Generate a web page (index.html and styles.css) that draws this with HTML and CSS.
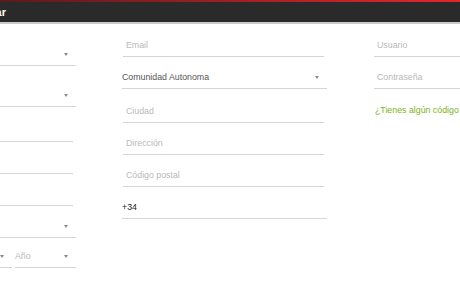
FILE: index.html
```html
<!DOCTYPE html>
<html lang="es">

<head>
    <meta charset="UTF-8">
    <meta name="viewport" content="width=device-width, initial-scale=1.0">
    <title>Registrar</title>
    <link rel="stylesheet" href="styles.css">
</head>

<body>
    <header class="topbar">
        <div class="topbar-title">
            <h1>Registrar</h1>
        </div>
    </header>

    <form class="register" id="registerForm">
        <div class="column">
            <div class="select first"><span class="value"></span><span class="caret"></span></div>
            <div class="select"><span class="value"></span><span class="caret"></span></div>
            <div class="field loose"><span class="placeholder">Nombre</span></div>
            <div class="field"><span class="placeholder">Apellidos</span></div>
            <div class="field"><span class="placeholder">DNI</span></div>
            <div class="select"><span class="value"></span><span class="caret"></span></div>
            <div class="date-row">
                <div class="select"><span class="placeholder">Día</span><span class="caret"></span></div>
                <div class="select"><span class="placeholder">Mes</span><span class="caret"></span></div>
                <div class="select"><span class="placeholder">Año</span><span class="caret"></span></div>
            </div>
        </div>

        <div class="column">
            <div class="field"><span class="placeholder">Email</span></div>
            <div class="select wide"><span class="value">Comunidad Autonoma</span><span class="caret"></span></div>
            <div class="field"><span class="placeholder">Ciudad</span></div>
            <div class="field"><span class="placeholder">Dirección</span></div>
            <div class="field"><span class="placeholder">Código postal</span></div>
            <div class="field phone"><span class="value">+34</span></div>
        </div>

        <div class="column">
            <div class="field"><span class="placeholder">Usuario</span></div>
            <div class="field"><span class="placeholder">Contraseña</span></div>
            <a href="#" class="promo">¿Tienes algún código promocional?</a>
        </div>
    </form>
</body>

</html>
```

FILE: styles.css
```css
body {
    margin: 0;
    font-family: 'Liberation Sans', Arial, sans-serif;
    font-size: 8.8px;
    background-color: #fff;
    color: #333;
    overflow: hidden;
}

.topbar {
    height: 20px;
    padding-top: 2px;
    background: linear-gradient(to right, #5a1a1c, #e3262c) top / 100% 2px no-repeat, #2a2a2a;
    border-bottom: 2px solid #c9c9c9;
    display: flex;
    align-items: center;
}

.topbar-title {
    width: 6px;
    display: flex;
    justify-content: flex-end;
}

.topbar-title h1 {
    margin: 0;
    white-space: nowrap;
    font-size: 11px;
    font-weight: bold;
    color: #fff;
}

.register {
    display: grid;
    grid-template-columns: 205px 205px 205px;
    column-gap: 46px;
    margin-left: -129px;
    padding-top: 11px;
}

.column {
    display: flex;
    flex-direction: column;
    gap: 10px;
}

.field,
.select {
    height: 21px;
    line-height: 21px;
    border-bottom: 1px solid #d4d4d4;
    display: flex;
    align-items: center;
    justify-content: space-between;
}

.field {
    margin: 0 3px 0 1px;
    padding-left: 3px;
}

.select {
    padding-right: 8px;
}

.select.first {
    margin-top: 9px;
    margin-bottom: 9px;
}

.select.wide {
    margin-bottom: 2px;
}

.field.loose {
    margin-top: 3px;
}

.placeholder {
    color: #b9b9b9;
}

.value {
    color: #555;
}

.phone .value {
    color: #222;
}

.phone {
    margin-left: 0;
    padding-left: 0;
    margin-right: 0;
}

.caret {
    width: 0;
    height: 0;
    border-left: 2.5px solid transparent;
    border-right: 2.5px solid transparent;
    border-top: 3px solid #8a8a8a;
}

.date-row {
    display: grid;
    grid-template-columns: 1fr 1fr 61px;
    column-gap: 3px;
    margin-top: -2px;
}

.date-row .select {
    padding-left: 0;
}

.promo {
    margin-top: 6px;
    color: #7bb31a;
    text-decoration: none;
    white-space: nowrap;
    padding-left: 2px;
}
```
